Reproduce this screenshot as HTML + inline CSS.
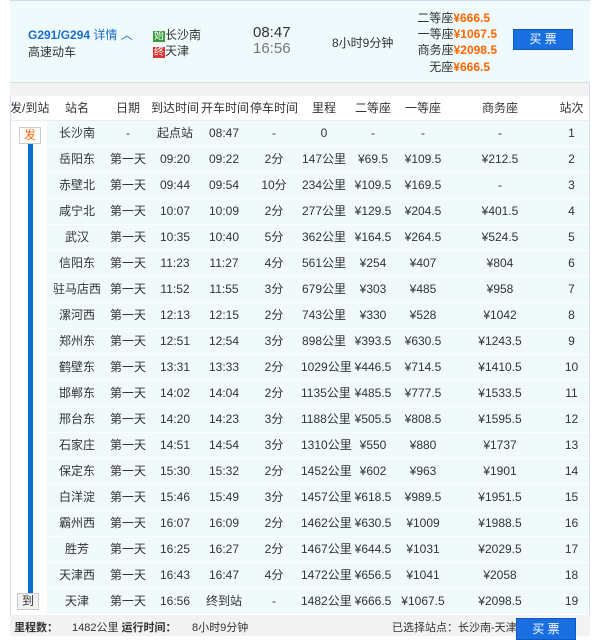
<!DOCTYPE html><html><head><meta charset="utf-8"><style>
body{margin:0;width:600px;height:636px;background:#fff;font-family:"Liberation Sans","Noto Sans CJK SC",sans-serif;font-size:12px;color:#333;position:relative;overflow:hidden}
.a{position:absolute;white-space:nowrap}
.hd{position:absolute;left:10px;top:0;width:580px;height:82px;background:#eefafc;border-top:1px solid #cde}
.or{color:#f60;font-weight:bold}
.btn{position:absolute;background:#1a6fe0;color:#fff;text-align:center;border:1px solid #0d5bc2}
table{position:absolute;left:10px;top:96px;width:580px;border-collapse:collapse;table-layout:fixed}
td,th{height:25px;text-align:center;padding:0;font-weight:normal;border-bottom:1px solid #e6eeee;font-size:12px;white-space:nowrap;overflow:visible;line-height:25px}
th{background:#fff;color:#333;height:24px;line-height:24px}
tr.r td{background:#f0fafa;border-bottom:1px solid #fff}
tr.r td.f{background:#fff}
.ft{font-size:11px}
</style></head><body>
<div class="hd"></div>
<div class="a" style="left:28px;top:26px;color:#1a6ec8;font-weight:bold;font-size:12px">G291/G294 <span style="font-weight:normal">详情 ︿</span></div>
<div class="a" style="left:28px;top:43px;font-size:12px">高速动车</div>
<div class="a" style="left:153px;top:26px"><span style="background:#3a9a3a;color:#fff;font-size:10px;padding:0 1px">始</span>长沙南</div>
<div class="a" style="left:153px;top:42px"><span style="background:#d33;color:#fff;font-size:10px;padding:0 1px">终</span>天津</div>
<div class="a" style="left:253px;top:24px;font-size:15px;color:#333">08:47</div>
<div class="a" style="left:253px;top:40px;font-size:15px;color:#777">16:56</div>
<div class="a" style="left:332px;top:34px">8小时9分钟</div>
<div class="a" style="left:400px;top:9px;width:90px;text-align:right">二等座<span class="or">¥666.5</span></div>
<div class="a" style="left:400px;top:25px;width:97px;text-align:right">一等座<span class="or">¥1067.5</span></div>
<div class="a" style="left:400px;top:41px;width:97px;text-align:right">商务座<span class="or">¥2098.5</span></div>
<div class="a" style="left:400px;top:58px;width:90px;text-align:right">无座<span class="or">¥666.5</span></div>
<div class="btn" style="left:513px;top:29px;width:58px;height:19px;line-height:19px">买 票</div>
<div class="a" style="left:10px;top:82px;width:580px;height:14px;background:#f2f2f2;border-top:1px solid #ddd"></div>
<table>
<colgroup><col style="width:37px"><col style="width:60px"><col style="width:42px"><col style="width:52px"><col style="width:46px"><col style="width:54px"><col style="width:46px"><col style="width:52px"><col style="width:48px"><col style="width:106px"><col style="width:37px"></colgroup>
<tr><th>发/到站</th><th>站名</th><th>日期</th><th>到达时间</th><th>开车时间</th><th>停车时间</th><th>里程</th><th>二等座</th><th>一等座</th><th>商务座</th><th>站次</th></tr>
<tr class="r"><td class="f"></td><td>长沙南</td><td>-</td><td>起点站</td><td>08:47</td><td>-</td><td>0</td><td>-</td><td>-</td><td>-</td><td>1</td></tr>
<tr class="r"><td class="f"></td><td>岳阳东</td><td>第一天</td><td>09:20</td><td>09:22</td><td>2分</td><td>147公里</td><td>¥69.5</td><td>¥109.5</td><td>¥212.5</td><td>2</td></tr>
<tr class="r"><td class="f"></td><td>赤壁北</td><td>第一天</td><td>09:44</td><td>09:54</td><td>10分</td><td>234公里</td><td>¥109.5</td><td>¥169.5</td><td>-</td><td>3</td></tr>
<tr class="r"><td class="f"></td><td>咸宁北</td><td>第一天</td><td>10:07</td><td>10:09</td><td>2分</td><td>277公里</td><td>¥129.5</td><td>¥204.5</td><td>¥401.5</td><td>4</td></tr>
<tr class="r"><td class="f"></td><td>武汉</td><td>第一天</td><td>10:35</td><td>10:40</td><td>5分</td><td>362公里</td><td>¥164.5</td><td>¥264.5</td><td>¥524.5</td><td>5</td></tr>
<tr class="r"><td class="f"></td><td>信阳东</td><td>第一天</td><td>11:23</td><td>11:27</td><td>4分</td><td>561公里</td><td>¥254</td><td>¥407</td><td>¥804</td><td>6</td></tr>
<tr class="r"><td class="f"></td><td>驻马店西</td><td>第一天</td><td>11:52</td><td>11:55</td><td>3分</td><td>679公里</td><td>¥303</td><td>¥485</td><td>¥958</td><td>7</td></tr>
<tr class="r"><td class="f"></td><td>漯河西</td><td>第一天</td><td>12:13</td><td>12:15</td><td>2分</td><td>743公里</td><td>¥330</td><td>¥528</td><td>¥1042</td><td>8</td></tr>
<tr class="r"><td class="f"></td><td>郑州东</td><td>第一天</td><td>12:51</td><td>12:54</td><td>3分</td><td>898公里</td><td>¥393.5</td><td>¥630.5</td><td>¥1243.5</td><td>9</td></tr>
<tr class="r"><td class="f"></td><td>鹤壁东</td><td>第一天</td><td>13:31</td><td>13:33</td><td>2分</td><td>1029公里</td><td>¥446.5</td><td>¥714.5</td><td>¥1410.5</td><td>10</td></tr>
<tr class="r"><td class="f"></td><td>邯郸东</td><td>第一天</td><td>14:02</td><td>14:04</td><td>2分</td><td>1135公里</td><td>¥485.5</td><td>¥777.5</td><td>¥1533.5</td><td>11</td></tr>
<tr class="r"><td class="f"></td><td>邢台东</td><td>第一天</td><td>14:20</td><td>14:23</td><td>3分</td><td>1188公里</td><td>¥505.5</td><td>¥808.5</td><td>¥1595.5</td><td>12</td></tr>
<tr class="r"><td class="f"></td><td>石家庄</td><td>第一天</td><td>14:51</td><td>14:54</td><td>3分</td><td>1310公里</td><td>¥550</td><td>¥880</td><td>¥1737</td><td>13</td></tr>
<tr class="r"><td class="f"></td><td>保定东</td><td>第一天</td><td>15:30</td><td>15:32</td><td>2分</td><td>1452公里</td><td>¥602</td><td>¥963</td><td>¥1901</td><td>14</td></tr>
<tr class="r"><td class="f"></td><td>白洋淀</td><td>第一天</td><td>15:46</td><td>15:49</td><td>3分</td><td>1457公里</td><td>¥618.5</td><td>¥989.5</td><td>¥1951.5</td><td>15</td></tr>
<tr class="r"><td class="f"></td><td>霸州西</td><td>第一天</td><td>16:07</td><td>16:09</td><td>2分</td><td>1462公里</td><td>¥630.5</td><td>¥1009</td><td>¥1988.5</td><td>16</td></tr>
<tr class="r"><td class="f"></td><td>胜芳</td><td>第一天</td><td>16:25</td><td>16:27</td><td>2分</td><td>1467公里</td><td>¥644.5</td><td>¥1031</td><td>¥2029.5</td><td>17</td></tr>
<tr class="r"><td class="f"></td><td>天津西</td><td>第一天</td><td>16:43</td><td>16:47</td><td>4分</td><td>1472公里</td><td>¥656.5</td><td>¥1041</td><td>¥2058</td><td>18</td></tr>
<tr class="r"><td class="f"></td><td>天津</td><td>第一天</td><td>16:56</td><td>终到站</td><td>-</td><td>1482公里</td><td>¥666.5</td><td>¥1067.5</td><td>¥2098.5</td><td>19</td></tr>
</table>
<div class="a" style="left:10px;top:96px;width:0;height:540px;border-left:1px solid #dde"></div>
<div class="a" style="left:589px;top:82px;width:0;height:554px;border-left:1px solid #dde"></div>
<div class="a" style="left:28px;top:140px;width:5px;height:455px;background:#0b6fce"></div>
<div class="a" style="left:19px;top:127px;width:20px;height:15px;line-height:15px;background:#fff;border:1px solid #ccc;text-align:center;color:#f60;font-size:12px">发</div>
<div class="a" style="left:17px;top:593px;width:20px;height:15px;line-height:15px;background:#f2f2f2;border:1px solid #ccc;text-align:center;font-size:12px">到</div>
<div class="a" style="left:10px;top:615px;width:580px;height:21px;background:#f2f2f2"></div>
<div class="a ft" style="left:14px;top:619px"><b>里程数：</b></div>
<div class="a ft" style="left:72px;top:619px">1482公里 <b>运行时间：</b></div>
<div class="a ft" style="left:192px;top:619px">8小时9分钟</div>
<div class="a ft" style="left:392px;top:619px">已选择站点：长沙南-天津</div>
<div class="btn" style="left:516px;top:618px;width:58px;height:20px;line-height:20px">买 票</div>
</body></html>
